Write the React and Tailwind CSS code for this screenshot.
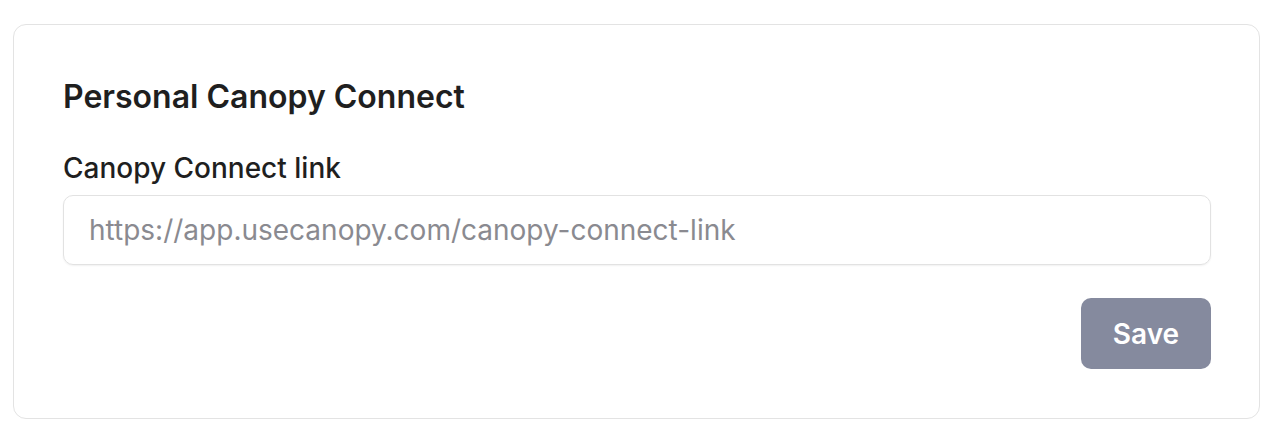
import React, { useState } from 'react';

const App = () => {
  const [link, setLink] = useState('');

  return (
    <div className="min-h-screen bg-white pl-[13px] pr-[24px] pt-[24px] pb-[19px]" style={{ fontFamily: 'Inter, "Noto Sans", sans-serif' }}>
      <div className="border border-[#e3e3e3] rounded-[13px] bg-white pl-[49px] pr-[48px] pt-[52px] pb-[49px]">
        <h2 className="text-[32px] leading-[40px] font-semibold text-[#1f1f1f]">Personal Canopy Connect</h2>

        <div className="mt-[34px]">
          <label htmlFor="canopy-link" className="block text-[28px] leading-[34px] font-medium text-[#1f1f1f]">
            Canopy Connect link
          </label>
          <input
            id="canopy-link"
            type="text"
            value={link}
            onChange={(e) => setLink(e.target.value)}
            placeholder="https://app.usecanopy.com/canopy-connect-link"
            className="mt-[10px] w-full h-[70px] px-[25px] text-[28px] text-[#1f1f1f] placeholder:text-[#8a8a90] border border-[#e2e2e2] rounded-[10px] shadow-[0_1px_2px_rgba(0,0,0,0.06)] focus:outline-none"
          />
        </div>

        <div className="flex justify-end mt-[33px]">
          <button
            type="button"
            className="w-[130px] h-[71px] rounded-[10px] bg-[#858a9e] text-white text-[28px] font-semibold"
          >
            Save
          </button>
        </div>
      </div>
    </div>
  );
};

export default App;
